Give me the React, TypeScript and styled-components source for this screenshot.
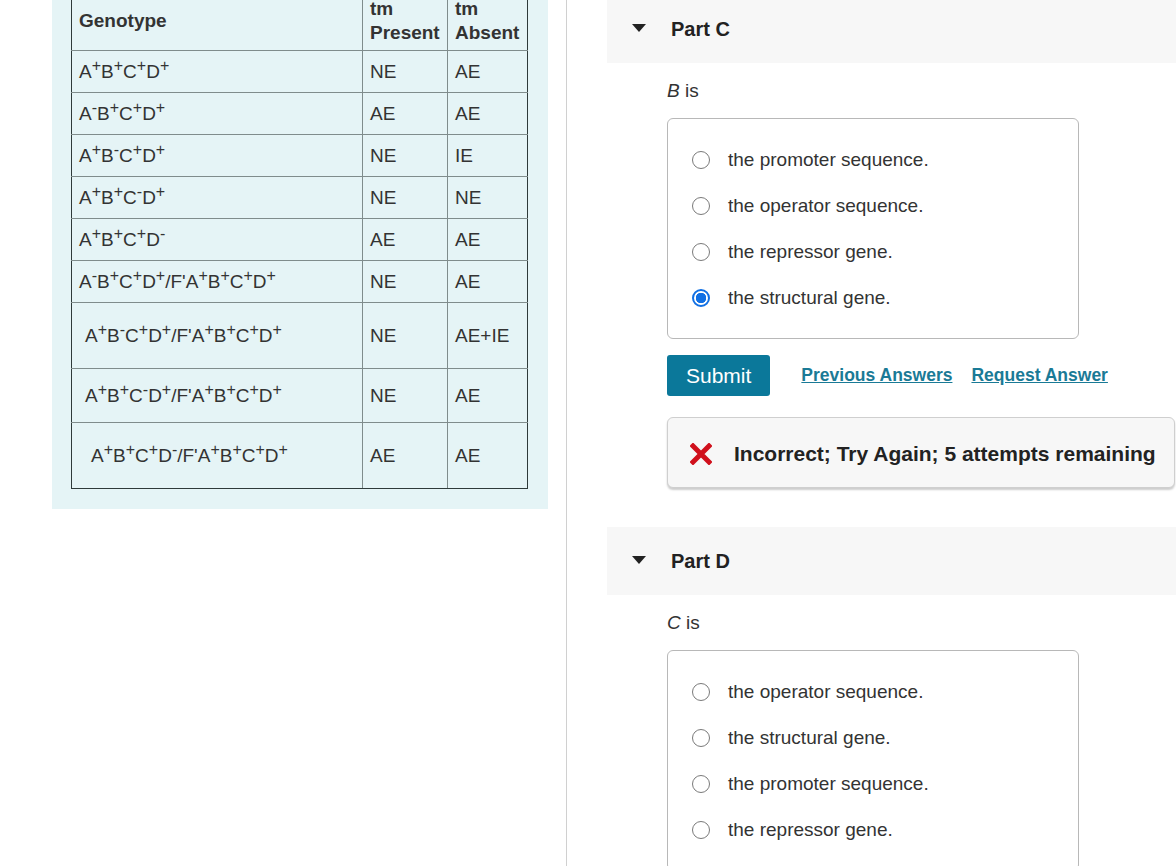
import React from 'react';
import styled, { createGlobalStyle } from 'styled-components';

const GlobalStyle = createGlobalStyle`
  html, body {
    margin: 0;
    padding: 0;
    background: #ffffff;
  }
  body {
    font-family: "Liberation Sans", Arial, sans-serif;
    color: #333333;
  }
`;

type Sign = '+' | '-';

interface GenotypeRow {
  genes: Sign[];
  partner?: Sign[];
  present: string;
  absent: string;
  height: number;
  indent: number;
}

const letters = ['A', 'B', 'C', 'D'];

const rows: GenotypeRow[] = [
  { genes: ['+', '+', '+', '+'], present: 'NE', absent: 'AE', height: 42, indent: 0 },
  { genes: ['-', '+', '+', '+'], present: 'AE', absent: 'AE', height: 42, indent: 0 },
  { genes: ['+', '-', '+', '+'], present: 'NE', absent: 'IE', height: 42, indent: 0 },
  { genes: ['+', '+', '-', '+'], present: 'NE', absent: 'NE', height: 42, indent: 0 },
  { genes: ['+', '+', '+', '-'], present: 'AE', absent: 'AE', height: 42, indent: 0 },
  { genes: ['-', '+', '+', '+'], partner: ['+', '+', '+', '+'], present: 'NE', absent: 'AE', height: 42, indent: 0 },
  { genes: ['+', '-', '+', '+'], partner: ['+', '+', '+', '+'], present: 'NE', absent: 'AE+IE', height: 66, indent: 6 },
  { genes: ['+', '+', '-', '+'], partner: ['+', '+', '+', '+'], present: 'NE', absent: 'AE', height: 54, indent: 6 },
  { genes: ['+', '+', '+', '-'], partner: ['+', '+', '+', '+'], present: 'AE', absent: 'AE', height: 66, indent: 12 },
];

const columns = [291, 85, 80];

const partC = ['the promoter sequence.', 'the operator sequence.', 'the repressor gene.', 'the structural gene.'];
const partD = ['the operator sequence.', 'the structural gene.', 'the promoter sequence.', 'the repressor gene.'];

const Alleles = ({ signs }: { signs: Sign[] }) => (
  <>
    {signs.map((s, i) => (
      <React.Fragment key={i}>
        {letters[i]}
        <sup>{s}</sup>
      </React.Fragment>
    ))}
  </>
);

const CaretDown = () => (
  <svg width="14" height="8" viewBox="0 0 14 8">
    <path d="M0 0 L14 0 L7 8 Z" fill="#222" />
  </svg>
);

const RedCross = () => (
  <svg width="22" height="22" viewBox="0 0 22 22">
    <path d="M3 3 L19 19 M19 3 L3 19" stroke="#d0101c" strokeWidth="5" strokeLinecap="square" />
  </svg>
);

const Question = ({
  title,
  letter,
  options,
  selected,
  children,
}: {
  title: string;
  letter: string;
  options: string[];
  selected?: number;
  children?: React.ReactNode;
}) => (
  <Part>
    <PartHeader>
      <Caret>
        <CaretDown />
      </Caret>
      <PartTitle>{title}</PartTitle>
    </PartHeader>
    <PartBody>
      <Prompt>
        <em>{letter}</em> is
      </Prompt>
      <OptionBox>
        {options.map((o, i) => (
          <OptionRow key={o}>
            <Radio $checked={i === selected} />
            <span>{o}</span>
          </OptionRow>
        ))}
      </OptionBox>
      {children}
    </PartBody>
  </Part>
);

export default function App() {
  return (
    <>
      <GlobalStyle />
      <Page>
        <LeftColumn>
          <TablePanel>
            <DataTable>
              <colgroup>
                {columns.map((w) => (
                  <Col key={w} $width={w} />
                ))}
              </colgroup>
              <thead>
                <tr>
                  <HeadCell>Genotype</HeadCell>
                  <HeadCell>
                    tm
                    <br />
                    Present
                  </HeadCell>
                  <HeadCell>
                    tm
                    <br />
                    Absent
                  </HeadCell>
                </tr>
              </thead>
              <tbody>
                {rows.map((r, i) => (
                  <BodyRow key={i} $height={r.height}>
                    <GenotypeCell $indent={r.indent}>
                      <Alleles signs={r.genes} />
                      {r.partner && (
                        <>
                          /F'
                          <Alleles signs={r.partner} />
                        </>
                      )}
                    </GenotypeCell>
                    <Cell>{r.present}</Cell>
                    <Cell>{r.absent}</Cell>
                  </BodyRow>
                ))}
              </tbody>
            </DataTable>
          </TablePanel>
        </LeftColumn>

        <RightColumn>
          <Question title="Part C" letter="B" options={partC} selected={3}>
            <Actions>
              <SubmitButton>Submit</SubmitButton>
              <TextLink href="#">Previous Answers</TextLink>
              <TextLink href="#">Request Answer</TextLink>
            </Actions>
            <Feedback>
              <RedCross />
              <span>Incorrect; Try Again; 5 attempts remaining</span>
            </Feedback>
          </Question>
          <Question title="Part D" letter="C" options={partD} />
        </RightColumn>
      </Page>
    </>
  );
}

const Page = styled.div`
  display: flex;
  height: 866px;
  overflow: hidden;
`;

const LeftColumn = styled.div`
  width: 567px;
  flex-shrink: 0;
  padding-left: 52px;
  box-sizing: border-box;
  border-right: 1px solid #d0d0d0;
`;

const TablePanel = styled.div`
  width: 496px;
  box-sizing: border-box;
  padding: 0 21px 20px 19px;
  background-color: #e5f4f6;
`;

const DataTable = styled.table`
  width: 456px;
  margin-top: -10px;
  border-collapse: collapse;
  table-layout: fixed;
  font-size: 19px;
  color: #333;

  td:first-child,
  th:first-child {
    border-left: 1px solid #2e3a3a;
  }
  td:last-child,
  th:last-child {
    border-right: 1px solid #2e3a3a;
  }
  tbody tr:last-child td {
    border-bottom: 1px solid #2e3a3a;
  }
`;

const Col = styled.col<{ $width: number }>`
  width: ${(p) => p.$width}px;
`;

const HeadCell = styled.th`
  height: 59px;
  padding: 0 7px;
  border: 1px solid #7f8c8c;
  text-align: left;
  vertical-align: middle;
  font-weight: bold;
  line-height: 24px;
  color: #333;
  white-space: nowrap;
`;

const BodyRow = styled.tr<{ $height: number }>`
  height: ${(p) => p.$height}px;
`;

const Cell = styled.td`
  padding: 0 7px;
  border: 1px solid #7f8c8c;
  vertical-align: middle;
  line-height: 22px;
  white-space: nowrap;

  sup {
    font-size: 16px;
    line-height: 0;
  }
`;

const GenotypeCell = styled(Cell)<{ $indent: number }>`
  padding-left: ${(p) => 7 + p.$indent}px;
`;

const RightColumn = styled.div`
  flex: 1;
  padding-left: 40px;
  margin-top: -5px;
`;

const Part = styled.section`
  display: flex;
  flex-direction: column;
  margin-bottom: 39px;
`;

const PartHeader = styled.div`
  height: 68px;
  display: flex;
  align-items: center;
  background-color: #f7f7f7;
`;

const Caret = styled.span`
  display: flex;
  width: 64px;
  justify-content: center;
  margin-top: -2px;
`;

const PartTitle = styled.h2`
  margin: 0;
  font-size: 20px;
  font-weight: bold;
  color: #222;
`;

const PartBody = styled.div`
  padding: 16px 0 0 60px;
  display: flex;
  flex-direction: column;
  align-items: flex-start;
`;

const Prompt = styled.div`
  font-size: 19px;
  line-height: 24px;
  color: #333;
  margin-bottom: 15px;
`;

const OptionBox = styled.div`
  width: 412px;
  box-sizing: border-box;
  padding: 18px 24px 17px;
  border: 1px solid #b8b8b8;
  border-radius: 6px;
  display: flex;
  flex-direction: column;
`;

const OptionRow = styled.label`
  height: 46px;
  display: flex;
  align-items: center;
  gap: 18px;
  font-size: 19px;
  color: #333;
`;

const Radio = styled.span<{ $checked?: boolean }>`
  width: 18px;
  height: 18px;
  box-sizing: border-box;
  border-radius: 50%;
  flex-shrink: 0;
  border: ${(p) => (p.$checked ? '2px solid #1170e4' : '1px solid #7a7a7a')};
  background: ${(p) => (p.$checked ? 'radial-gradient(circle, #1170e4 0 5px, #fff 5.5px)' : '#fff')};
`;

const Actions = styled.div`
  display: flex;
  align-items: center;
  gap: 19px;
  margin-top: 16px;
`;

const SubmitButton = styled.button`
  height: 41px;
  padding: 0 19px;
  margin-right: 12px;
  border: none;
  border-radius: 3px;
  background-color: #0b789a;
  color: #fff;
  font-family: "Liberation Sans", Arial, sans-serif;
  font-size: 21px;
  cursor: pointer;
`;

const TextLink = styled.a`
  font-size: 17.5px;
  font-weight: bold;
  color: #1a7a96;
  text-decoration: underline;
`;

const Feedback = styled.div`
  width: 508px;
  height: 71px;
  box-sizing: border-box;
  margin-top: 21px;
  padding: 2px 0 0 22px;
  display: flex;
  align-items: center;
  gap: 22px;
  background-color: #f7f7f7;
  border: 1px solid #cfcfcf;
  border-radius: 6px;
  box-shadow: 0 2px 2px rgba(0, 0, 0, 0.2);
  font-size: 21px;
  font-weight: bold;
  color: #222;
`;
